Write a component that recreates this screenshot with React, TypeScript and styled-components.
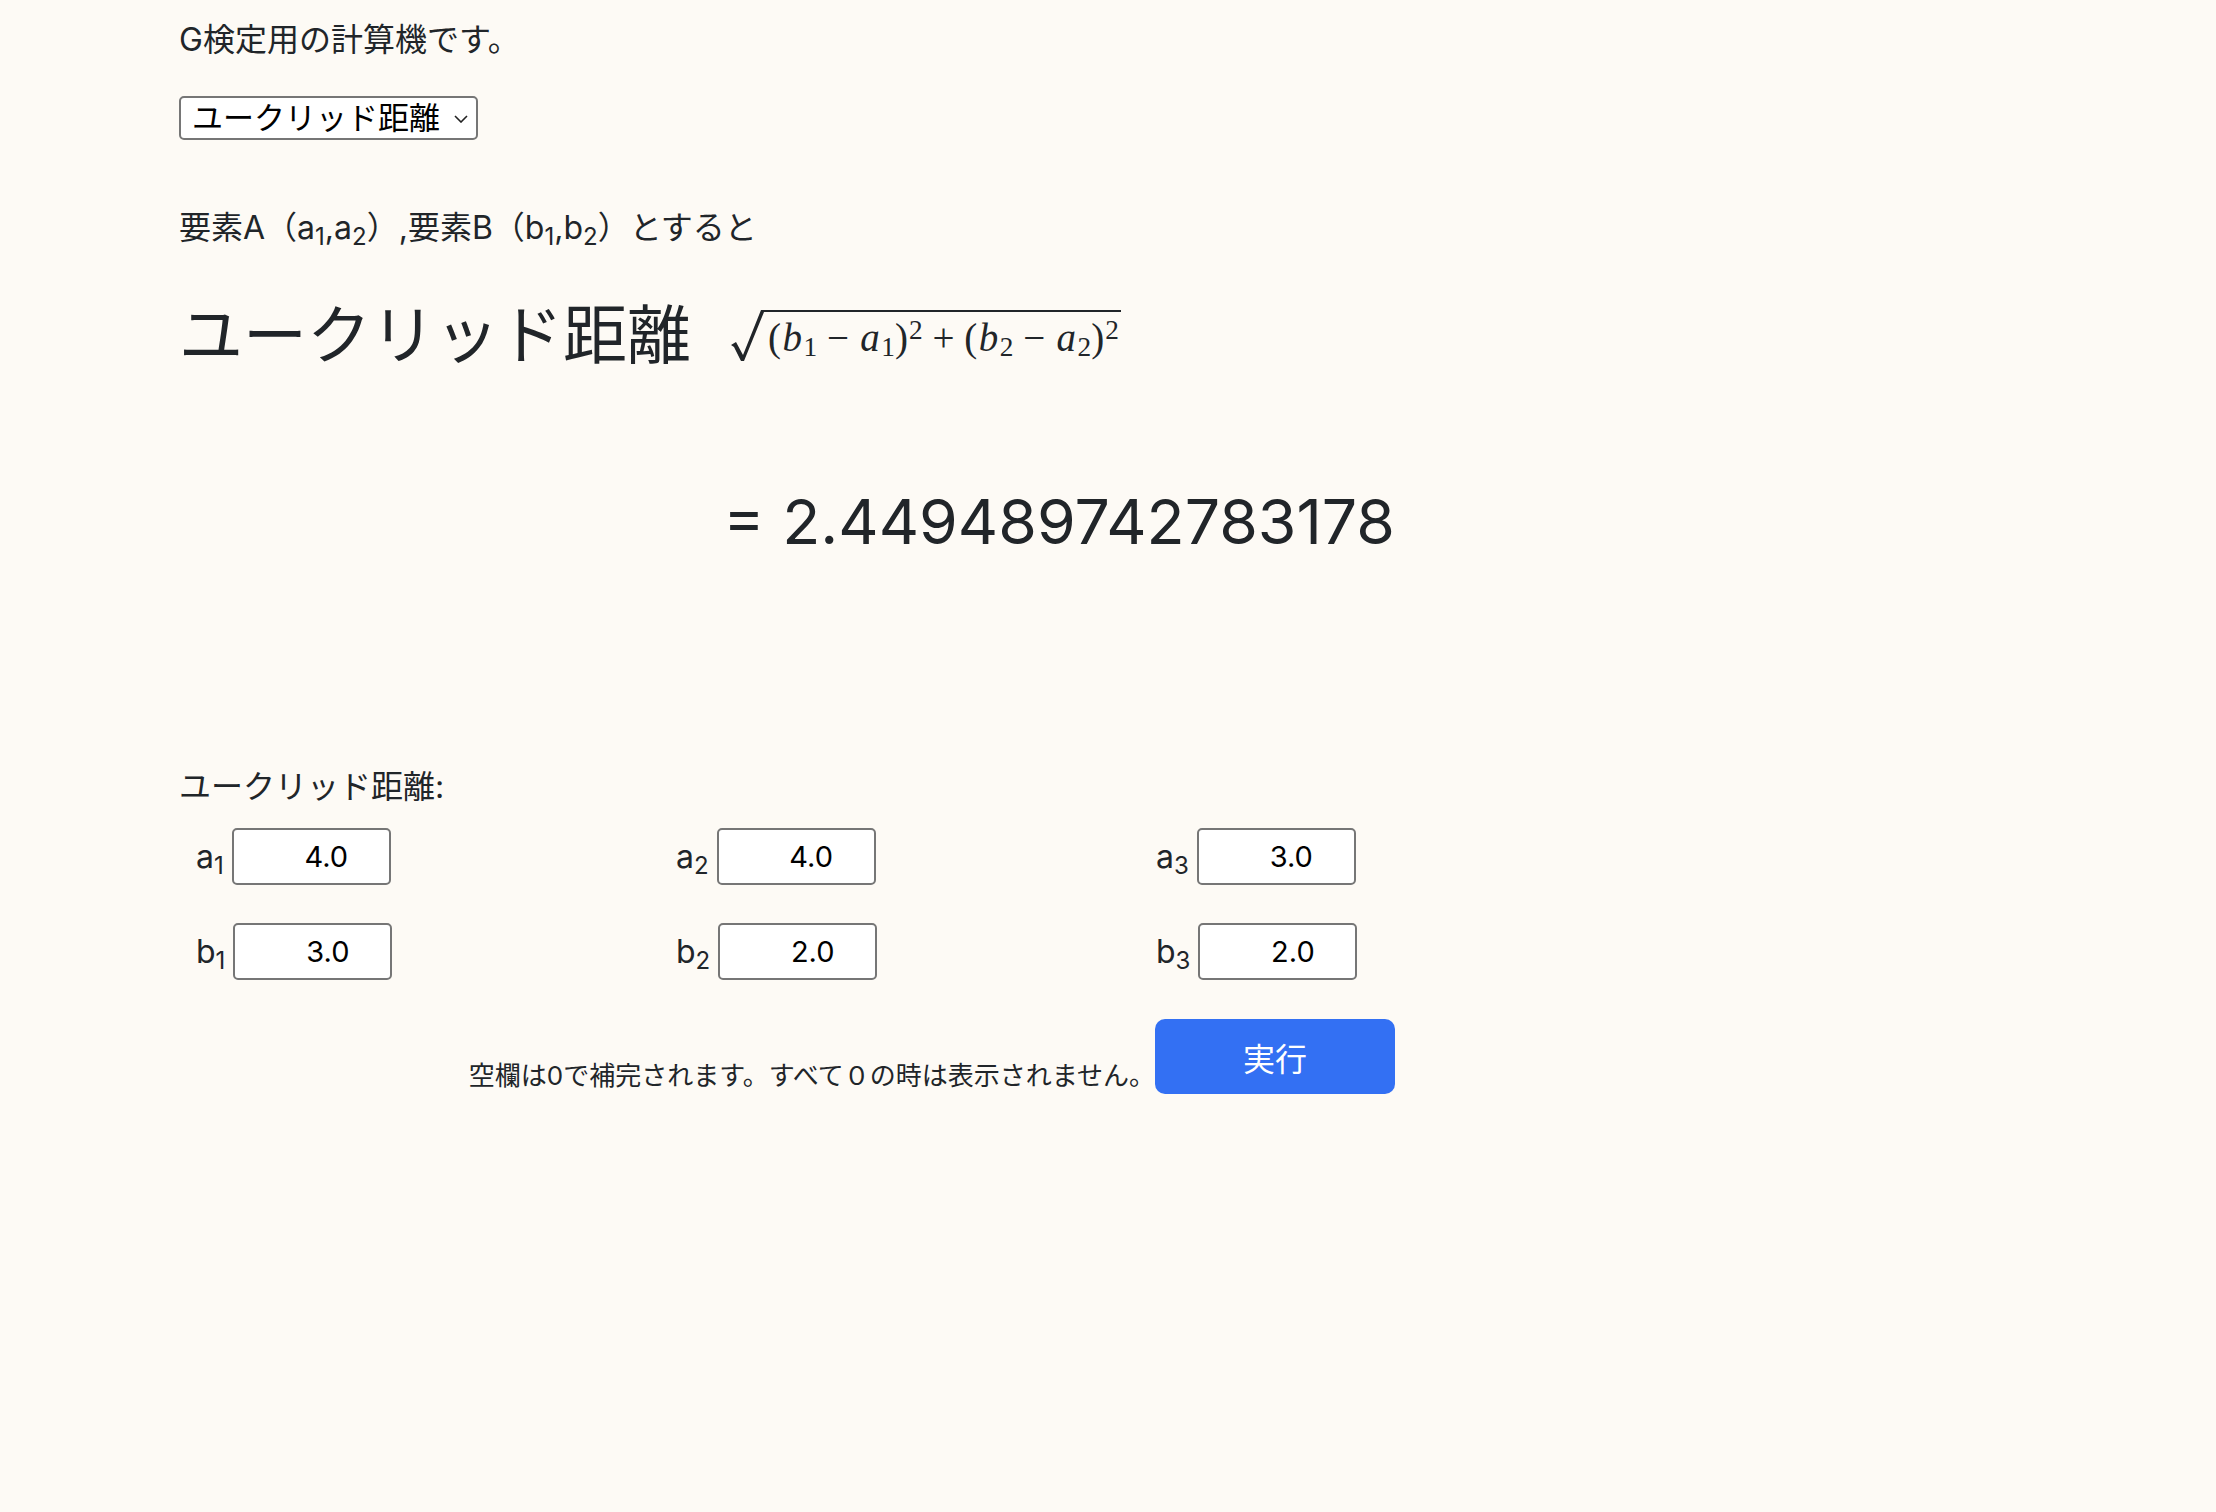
import * as React from 'react'
import styled, { createGlobalStyle } from 'styled-components'

const GlobalStyle = createGlobalStyle`
  html, body {
    margin: 0;
    padding: 0;
    background: #fdfaf5;
  }
  body {
    font-family: Inter, "Noto Sans CJK JP", sans-serif;
    font-size: 32px;
    line-height: 1.5;
    color: #212529;
  }
`

const TEXT = '#212529'

const fields = [
  { name: 'a', idx: 1, value: '4.0' },
  { name: 'a', idx: 2, value: '4.0' },
  { name: 'a', idx: 3, value: '3.0' },
  { name: 'b', idx: 1, value: '3.0' },
  { name: 'b', idx: 2, value: '2.0' },
  { name: 'b', idx: 3, value: '2.0' }
]

const App: React.FC = () => {
  const [mode, setMode] = React.useState('euclid')
  return (
    <>
      <GlobalStyle />
      <Container>
        <Intro>G検定用の計算機です。</Intro>
        <SelectWrap>
          <Select value={mode} onChange={(e) => setMode(e.target.value)}>
            <option value='euclid'>ユークリッド距離</option>
            <option value='manhattan'>マンハッタン距離</option>
            <option value='cos'>コサイン類似度</option>
          </Select>
          <Chevron viewBox='0 0 14 8' width={14} height={8}>
            <path d='M1 1 L7 7 L13 1' fill='none' stroke='#222' strokeWidth={1.6} />
          </Chevron>
        </SelectWrap>

        <Lead>
          要素A（a<Sub>1</Sub>,a<Sub>2</Sub>）,要素B（b<Sub>1</Sub>,b<Sub>2</Sub>）とすると
        </Lead>

        <HeadingRow>
          <Heading>ユークリッド距離</Heading>
          <Formula>
            <Radical viewBox='0 0 34 52' width={34} height={52}>
              <path d='M1 35 L6 32 L13 45 L31 0 L34 0 L34 2 L14 51 L11 51 L4 37 Z' fill={TEXT} />
            </Radical>
            <Radicand>
              <Paren>(</Paren><Var>b</Var><MathSub>1</MathSub>
              <Op>−</Op>
              <Var>a</Var><MathSub>1</MathSub><Paren>)</Paren><MathSup>2</MathSup>
              <Op>+</Op>
              <Paren>(</Paren><Var>b</Var><MathSub>2</MathSub>
              <Op>−</Op>
              <Var>a</Var><MathSub>2</MathSub><Paren>)</Paren><MathSup>2</MathSup>
            </Radicand>
          </Formula>
        </HeadingRow>

        <Result>= 2.449489742783178</Result>

        <SectionLabel>ユークリッド距離:</SectionLabel>
        <InputGrid>
          {fields.map((f) => (
            <Field key={f.name + f.idx}>
              <FieldLabel>
                {f.name}<Sub>{f.idx}</Sub>
              </FieldLabel>
              <NumberInput type='text' defaultValue={f.value} />
            </Field>
          ))}
        </InputGrid>

        <BottomRow>
          <Note>空欄は0で補完されます。すべて０の時は表示されません。</Note>
          <RunButton type='button'>実行</RunButton>
        </BottomRow>
      </Container>
    </>
  )
}

export default App

const Container = styled.div`
  max-width: 1920px;
  margin: 0 auto;
  padding: 16px 24px 0 31px;
  min-height: 1496px;
  box-sizing: border-box;
`

const Intro = styled.p`
  margin: 0;
`

const SelectWrap = styled.div`
  position: relative;
  display: inline-block;
  margin-top: 32px;
  vertical-align: top;
`

const Select = styled.select`
  appearance: none;
  width: 299px;
  height: 44px;
  box-sizing: border-box;
  padding: 0 30px 0 11px;
  border: 2px solid #767676;
  border-radius: 5px;
  background: #fff;
  color: #000;
  font-family: Inter, "Noto Sans CJK JP", sans-serif;
  font-size: 31px;
  line-height: 40px;
  display: block;
`

const Chevron = styled.svg`
  position: absolute;
  right: 10px;
  top: 19px;
  pointer-events: none;
`

const Sub = styled.sub`
  font-size: 0.75em;
  line-height: 0;
  vertical-align: -0.25em;
`

const Lead = styled.p`
  margin: 64px 0 0;
`

const HeadingRow = styled.div`
  display: flex;
  align-items: flex-start;
  margin-top: 46px;
`

const Heading = styled.h2`
  margin: 0;
  font-size: 64px;
  font-weight: 400;
  line-height: 74px;
`

const Formula = styled.div`
  display: flex;
  align-items: flex-start;
  margin-left: 39px;
  margin-top: 12px;
  color: ${TEXT};
`

const Radical = styled.svg`
  display: block;
  flex: none;
  margin-right: -1px;
`

const Radicand = styled.div`
  border-top: 2px solid ${TEXT};
  padding: 5px 2px 0 5px;
  font-family: "Liberation Serif", "DejaVu Serif", serif;
  font-size: 39px;
  line-height: 42px;
  white-space: nowrap;
`

const Paren = styled.span`
  font-style: normal;
`

const Var = styled.span`
  font-style: italic;
  margin: 0 0.04em;
`

const MathSub = styled.span`
  font-size: 0.7em;
  vertical-align: -0.2em;
  line-height: 0;
`

const MathSup = styled.span`
  font-size: 0.7em;
  vertical-align: 0.45em;
  line-height: 0;
  margin-left: 0.04em;
`

const Op = styled.span`
  margin: 0 0.25em;
`

const Result = styled.div`
  width: 1216px;
  margin-top: 112px;
  text-align: right;
  font-size: 62.5px;
  line-height: 74px;
  white-space: nowrap;
`

const SectionLabel = styled.div`
  margin-top: 205px;
`

const InputGrid = styled.div`
  display: grid;
  grid-template-columns: repeat(3, 480px);
  row-gap: 38px;
  margin-top: 17px;
  margin-left: -7px;
`

const Field = styled.div`
  display: flex;
  align-items: center;
  gap: 8px;
  padding-left: 24px;
`

const FieldLabel = styled.span`
  font-size: 32px;
  line-height: 1;
`

const NumberInput = styled.input`
  width: 159px;
  height: 57px;
  box-sizing: border-box;
  border: 2px solid #767676;
  border-radius: 5px;
  background: #fff;
  color: #000;
  font-family: Inter, sans-serif;
  font-size: 29px;
  text-align: center;
  padding: 0 0 0 30px;
`

const BottomRow = styled.div`
  display: flex;
  justify-content: flex-end;
  align-items: flex-end;
  width: 1216px;
  margin-top: 39px;
`

const Note = styled.span`
  font-size: 26px;
  line-height: 36px;
`

const RunButton = styled.button`
  width: 240px;
  height: 75px;
  border: none;
  border-radius: 10px;
  background: #3370f3;
  color: #fff;
  font-family: Inter, "Noto Sans CJK JP", sans-serif;
  font-size: 32px;
  cursor: pointer;
`
